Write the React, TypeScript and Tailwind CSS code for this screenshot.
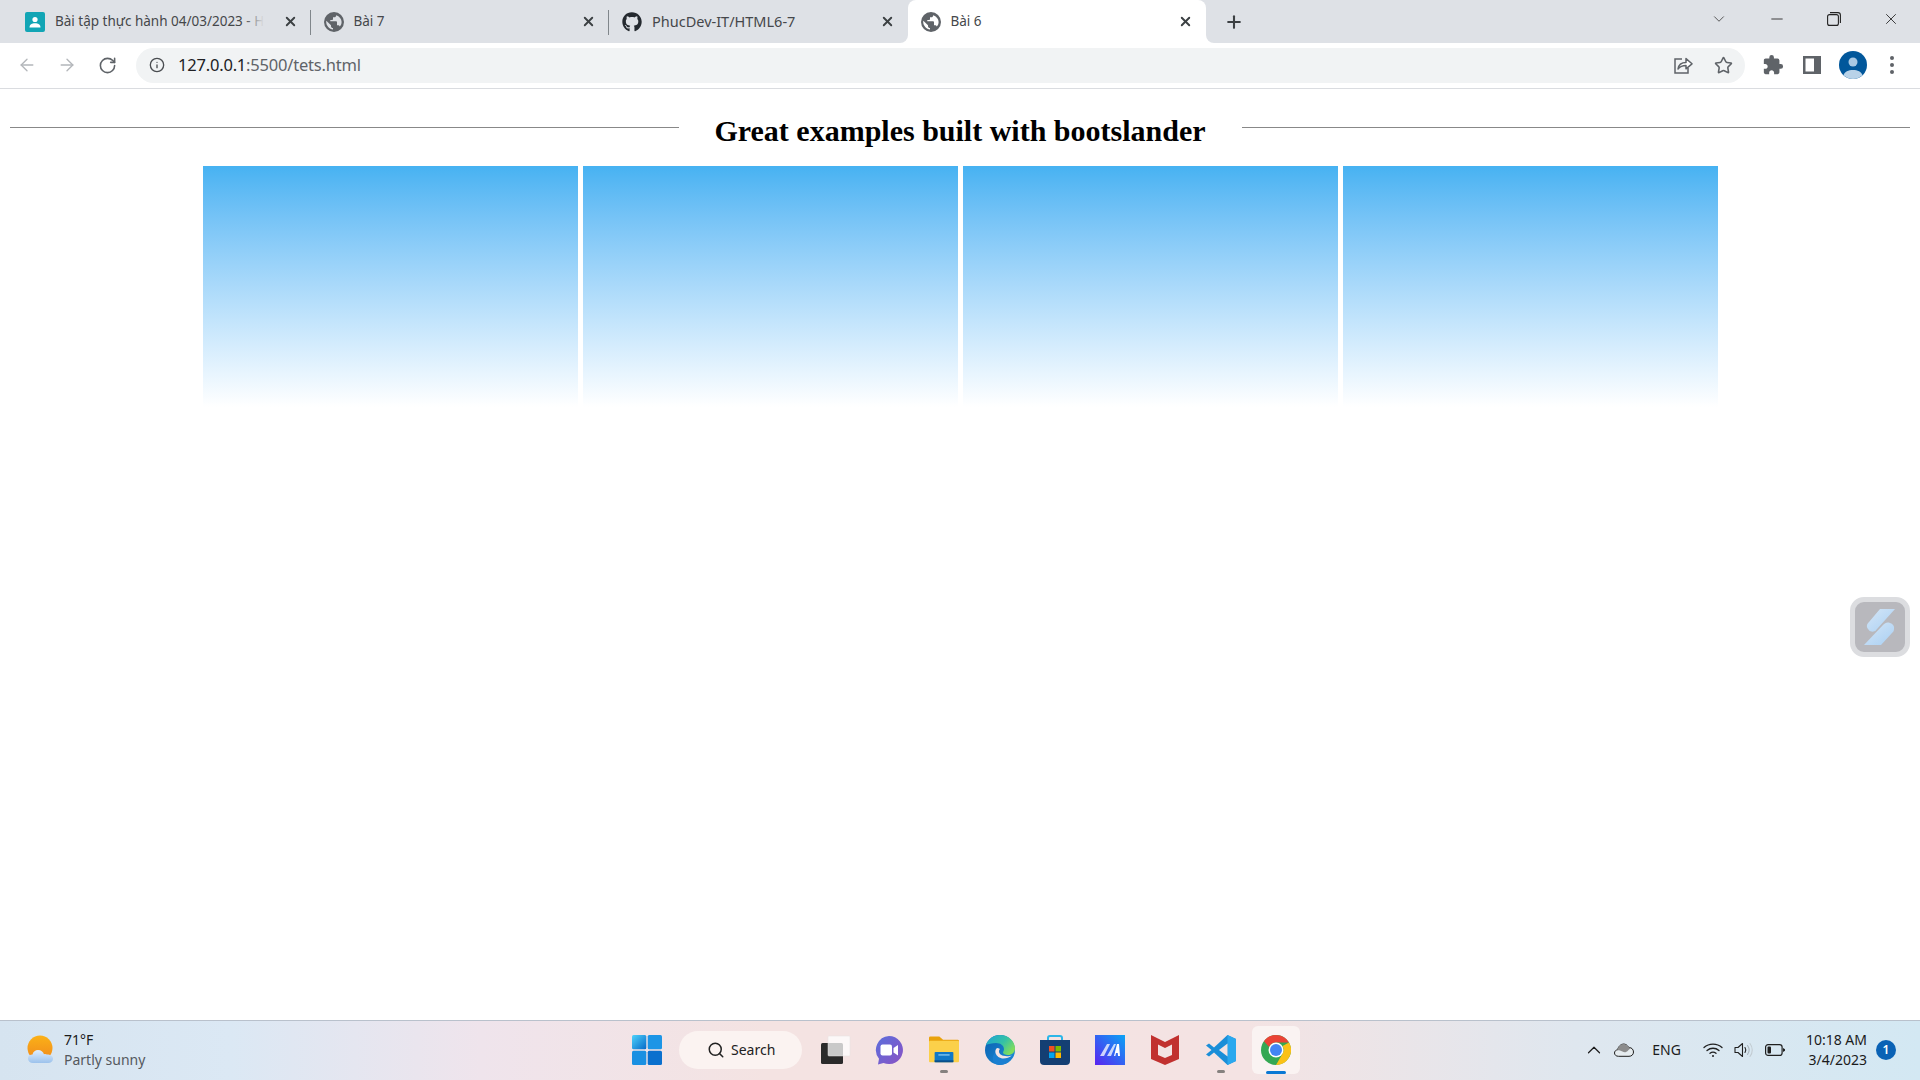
import { Star, X, Plus, ArrowLeft, ArrowRight, RotateCw, Info, ChevronDown, ChevronUp, Minus, Search } from "lucide-react";
import { FaGithub } from "react-icons/fa";
import { MdExtension } from "react-icons/md";

const tabs = [
  { id: "class", title: "Bài tập thực hành 04/03/2023 - H", icon: "classroom", fade: true, size: "text-[13.5px]" },
  { id: "b7", title: "Bài 7", icon: "globe", size: "text-[13.5px]" },
  { id: "gh", title: "PhucDev-IT/HTML6-7", icon: "github", size: "text-[14.5px]" },
  { id: "b6", title: "Bài 6", icon: "globe", active: true, size: "text-[13.5px]" },
];

function TabIcon({ icon }: { icon: string }) {
  if (icon === "classroom") {
    return (
      <svg width="20" height="20" viewBox="0 0 20 20" className="shrink-0">
        <rect width="20" height="20" rx="2" fill="#12a5b5" />
        <circle cx="10" cy="7.5" r="2.6" fill="#fff" />
        <path d="M4.5 15.5c0-3 2.5-4.2 5.5-4.2s5.5 1.2 5.5 4.2z" fill="#fff" />
      </svg>
    );
  }
  if (icon === "github") return <FaGithub className="shrink-0 text-[20px] text-[#24292f]" />;
  // chrome's default favicon: solid disc with the land cut out
  return (
    <svg width="20" height="20" viewBox="2 2 20 20" className="shrink-0">
      <path
        fill="#5f6368"
        fillRule="evenodd"
        d="M12 2a10 10 0 1 0 0 20 10 10 0 0 0 0-20zM4.300 10.800L9 15.300v.9c0 1.100.9 1.900 2 1.900v1.500c-3.600-.6-6.800-3.900-6.800-7.600 0-.4 0-.8.1-1.200zM14.200 5.200c3 1.100 5.400 3.700 5.400 6.800 0 1.800-.6 3.300-1.800 4.600-.3-.8-1-1.300-1.800-1.300h-1v-3c0-.5-.5-1-1-1H8.300V10H10c.5 0 1-.4 1-1V7.300h1.300c1.100 0 1.900-1 1.900-2.100z"
      />
    </svg>
  );
}

type TabProps = { title: string; icon: string; size: string; active?: boolean; last?: boolean; fade?: boolean };

function BrowserTab({ title, icon, size, active, last, fade }: TabProps) {
  return (
    <div className={`relative flex h-full w-[298.500px] items-center pr-[13px] pl-[13px] ${active ? "rounded-t-lg bg-white" : ""}`}>
      {active && (
        <>
          <span className="absolute bottom-0 -left-2 size-2 bg-white">
            <span className="block size-full rounded-br-lg bg-[#dee1e6]" />
          </span>
          <span className="absolute bottom-0 -right-2 size-2 bg-white">
            <span className="block size-full rounded-bl-lg bg-[#dee1e6]" />
          </span>
        </>
      )}
      <TabIcon icon={icon} />
      <div className={`relative ml-[10px] min-w-0 flex-1 whitespace-nowrap text-[#45474a] ${size}`}>
        <span className="relative inline-block">
          {title}
          {fade && <span className="absolute inset-y-0 right-0 w-5 bg-gradient-to-r from-transparent to-[#dee1e6]" />}
        </span>
      </div>
      <X className="ml-2 size-[15px] shrink-0 text-[#3c4043]" strokeWidth={3} />
      {!active && !last && <span className="absolute top-[10px] right-0 h-[25px] w-px bg-[#80868b]" />}
    </div>
  );
}

function ShareIcon() {
  return (
    <svg width="20" height="20" viewBox="0 0 20 20" fill="none" stroke="#5f6368" strokeWidth="1.5">
      <path d="M9 4H2v14h13v-5" />
      <path d="M5 14c.6-4 3.6-6.500 8-6.500V3.600l6 5.200-6 5V10.500c-3 0-6 1-8 3.500z" strokeLinejoin="round" fill="#fff" />
    </svg>
  );
}

function WeatherIcon() {
  return (
    <svg width="30" height="30" viewBox="0 0 30 30">
      <defs>
        <linearGradient id="sun" x1="0" y1="0" x2="0" y2="1">
          <stop offset="0" stopColor="#fbb117" />
          <stop offset="1" stopColor="#f08a1d" />
        </linearGradient>
        <linearGradient id="cloud" x1="0" y1="0" x2="0" y2="1">
          <stop offset="0" stopColor="#dfeeff" />
          <stop offset="1" stopColor="#9cc2ec" />
        </linearGradient>
      </defs>
      <circle cx="14" cy="13" r="12.500" fill="url(#sun)" />
      <path d="M7 28c-3 0-5-2-5-4.500S4 19.500 6.500 19.500c.5-2.800 3-4.500 5.500-4.500 3 0 5.200 1.800 6 4.200 1-.4 2-.2 3 .3 3.500 0 6 1.800 6 4.300S25 28 22 28z" fill="url(#cloud)" />
    </svg>
  );
}

function WindowsLogo() {
  return (
    <svg width="30" height="30" viewBox="0 0 30 30">
      <defs>
        <linearGradient id="win" x1="0" y1="0" x2="1" y2="1">
          <stop offset="0" stopColor="#4fd3fb" />
          <stop offset="1" stopColor="#0569c9" />
        </linearGradient>
      </defs>
      <rect x="0" y="0" width="14.300" height="14.300" rx="1.500" fill="url(#win)" />
      <rect x="15.700" y="0" width="14.300" height="14.300" rx="1.500" fill="#1c95e6" />
      <rect x="0" y="15.700" width="14.300" height="14.300" rx="1.500" fill="#1a90e2" />
      <rect x="15.700" y="15.700" width="14.300" height="14.300" rx="1.500" fill="#0a70ce" />
    </svg>
  );
}

function TaskViewIcon() {
  return (
    <svg width="30" height="30" viewBox="0 0 30 30">
      <rect x="0" y="8" width="22" height="21" rx="1.500" fill="#2a2a2a" />
      <rect x="7" y="1" width="22" height="20" rx="1" fill="#fff" fillOpacity="0.75" stroke="#e6e0e0" strokeWidth="0.500" />
    </svg>
  );
}

function ChatIcon() {
  return (
    <svg width="30" height="30" viewBox="0 0 30 30">
      <defs>
        <linearGradient id="chat" x1="0" y1="0" x2="1" y2="1">
          <stop offset="0" stopColor="#5b6fdc" />
          <stop offset="1" stopColor="#8a52c4" />
        </linearGradient>
      </defs>
      <path d="M15 1a14 14 0 1 1-5.500 26.900L4 29.500l1-5.800A14 14 0 0 1 15 1z" fill="url(#chat)" />
      <rect x="6.500" y="9.500" width="11.500" height="11" rx="2" fill="#fff" />
      <path d="M19.500 13l4.500-3v10.500l-4.500-3z" fill="#fff" />
    </svg>
  );
}

function FolderIcon() {
  return (
    <svg width="32" height="30" viewBox="0 0 32 30">
      <path d="M0 2a1.500 1.500 0 0 1 1.500-1.500H11L15 4h15.500A1.500 1.500 0 0 1 32 5.500V9H0z" fill="#e9a20c" />
      <rect x="0" y="5" width="32" height="23" rx="1" fill="#fbd04a" />
      <rect x="6" y="17" width="20" height="11" rx="1" fill="#0f78c8" />
      <rect x="6" y="26" width="20" height="2" fill="#0a4f8a" />
      <rect x="10" y="19.500" width="12" height="1.500" fill="#7fc5f0" />
    </svg>
  );
}

function EdgeIcon() {
  return (
    <svg width="30" height="30" viewBox="0 0 30 30">
      <defs>
        <linearGradient id="edgeA" x1="0" y1="0" x2="1" y2="0.600">
          <stop offset="0" stopColor="#1ba4d8" />
          <stop offset="0.600" stopColor="#35c1a5" />
          <stop offset="1" stopColor="#7fdc5d" />
        </linearGradient>
        <linearGradient id="edgeB" x1="0" y1="0" x2="1" y2="1">
          <stop offset="0" stopColor="#0a5fb0" />
          <stop offset="1" stopColor="#1d8fd8" />
        </linearGradient>
      </defs>
      <circle cx="15" cy="15" r="15" fill="url(#edgeB)" />
      <path d="M1 10C3 4 8.500 0 15 0c8.300 0 15 6 15 13.500 0 4-3 6.500-7 6.500-3 0-5-1-5-2.500 0-1 1-1.500 1-3.500 0-3-3-6-8-6-4 0-8 1-10 2z" fill="url(#edgeA)" />
      <path d="M11 17c0 4 3.500 6.500 8 6.500 3 0 6-.8 9-3-2 5.500-7 9.500-13 9.500-3 0-6-1-7-5-1-3 1-7 3-8z" fill="#1a7fd1" />
      <path d="M12 13c-1.500 1-2 3-1.500 5 1 3 4 5.500 8 5.500 3 0 6-1 8.500-3-1 .3-3 .7-5 .7-5 0-8-2-8-4.700 0-1 .3-2 1-2.500-1-.8-2-1-3-1z" fill="#f3e3e3" />
    </svg>
  );
}

function StoreIcon() {
  return (
    <svg width="30" height="30" viewBox="0 0 30 30">
      <path d="M8 6V3a2 2 0 0 1 2-2h10a2 2 0 0 1 2 2v3" fill="none" stroke="#2cb6e8" strokeWidth="2" />
      <path d="M0 5h30v21a4 4 0 0 1-4 4H4a4 4 0 0 1-4-4z" fill="#143f73" />
      <rect x="9" y="11" width="5.500" height="5.500" fill="#f25022" />
      <rect x="15.500" y="11" width="5.500" height="5.500" fill="#7fba00" />
      <rect x="9" y="17.500" width="5.500" height="5.500" fill="#00a4ef" />
      <rect x="15.500" y="17.500" width="5.500" height="5.500" fill="#ffb900" />
    </svg>
  );
}

function MaIcon() {
  return (
    <svg width="30" height="30" viewBox="0 0 30 30">
      <defs>
        <linearGradient id="ma" x1="0" y1="1" x2="1" y2="0">
          <stop offset="0" stopColor="#5a22f0" />
          <stop offset="1" stopColor="#0aa4f5" />
        </linearGradient>
      </defs>
      <rect width="30" height="30" fill="url(#ma)" />
      <path d="M5 21L12 9h3L9 21zM12 21L19 9h2L16 21z" fill="#fff" fillOpacity="0.75" />
      <path d="M19 21l3-12h2l1 12h-2l-.2-3H21l-.7 3z" fill="#fff" />
    </svg>
  );
}

function McAfeeIcon() {
  return (
    <svg width="28" height="30" viewBox="0 0 28 30">
      <path d="M0 0l7 3.500L14 7l7-3.500L28 0v24l-14 6-14-6z" fill="#c1312f" />
      <path d="M7 9.500l7 3.500 7-3.500v10.500l-7 3-7-3z" fill="#f3e3e3" />
    </svg>
  );
}

function VsCodeIcon() {
  return (
    <svg width="30" height="30" viewBox="0 0 30 30">
      <path d="M21.500 0L30 4v22l-8.500 4L8 17.500l-5 4L0 19.500 5.500 15 0 10.500l3-2 5 4z" fill="#1a8ed8" />
      <path d="M21.500 0L30 4v22l-8.500 4z" fill="#2aa8ee" />
      <path d="M21.500 8.500v13L13 15z" fill="#f3e3e3" />
    </svg>
  );
}

function ChromeIcon() {
  return (
    <svg width="30" height="30" viewBox="0 0 30 30">
      <circle cx="15" cy="15" r="15" fill="#34a853" />
      <path d="M15 0a15 15 0 0 1 13 7.500H15a7.500 7.500 0 0 0-6.900 4.500L2.900 6.200A15 15 0 0 1 15 0z" fill="#ea4335" />
      <path d="M28 7.500A15 15 0 0 1 15 30l6.500-11.300A7.500 7.500 0 0 0 21.500 11z" fill="#fbc116" />
      <circle cx="15" cy="15" r="7.500" fill="#fff" />
      <circle cx="15" cy="15" r="6" fill="#4285f4" />
    </svg>
  );
}

function WifiIcon() {
  return (
    <svg width="20" height="16" viewBox="0 0 20 16" fill="none" stroke="#1f1f1f" strokeWidth="1.300" strokeLinecap="round">
      <path d="M1 5.500c5-4.500 13-4.500 18 0" />
      <path d="M4 8.500c3.500-3 8.500-3 12 0" />
      <path d="M7 11.300c1.800-1.500 4.200-1.500 6 0" />
      <circle cx="10" cy="14" r="1" fill="#1f1f1f" stroke="none" />
    </svg>
  );
}

function SpeakerIcon() {
  return (
    <svg width="20" height="18" viewBox="0 0 20 18" fill="none" strokeWidth="1.100">
      <path d="M1 6.500h3L8.500 2.500v13L4 11.500H1z" stroke="#1f1f1f" strokeLinejoin="round" />
      <path d="M11 6.500c1 1.500 1 3.500 0 5" stroke="#1f1f1f" strokeLinecap="round" />
      <path d="M13.500 4.500c2 2.700 2 6.300 0 9" stroke="#a9b4bc" strokeLinecap="round" />
      <path d="M16 2.500c3 3.800 3 9.200 0 13" stroke="#c3ccd2" strokeLinecap="round" />
    </svg>
  );
}

function BatteryIcon() {
  return (
    <svg width="20" height="12" viewBox="0 0 20 12" fill="none">
      <rect x="0.600" y="0.600" width="16.500" height="10.800" rx="2.500" stroke="#1f1f1f" strokeWidth="1.200" />
      <rect x="2.500" y="2.500" width="3.500" height="7" rx="1" fill="#1f1f1f" />
      <path d="M18 4l2 1.200v1.600L18 8z" fill="#1f1f1f" />
    </svg>
  );
}

function TrayCloud() {
  return (
    <svg width="20" height="14" viewBox="0 0 20 14">
      <path d="M4.500 13.300C2 13.300.5 11.800.5 10s1.300-3 3-3.200C4.300 3.800 6.500 1 9.500 1c2.300 0 4 1.300 5 3.300 2.800 0 5 2 5 4.700s-2 4.300-4.500 4.300z" fill="#e6ecef" stroke="#1f1f1f" strokeWidth="1" />
      <path d="M.8 9.200C2 7 4 6.800 6 7.500c2 .8 4 2.200 6 1.500s3-3.500 5-3.500c-.7-.7-1.600-1.200-2.500-1.200-1-2-2.700-3.300-5-3.300-3 0-5.200 2.800-6 5.800C2.100 7 1.100 8 .8 9.200z" fill="#8c8c8c" />
    </svg>
  );
}

function ProfileAvatar() {
  return (
    <svg width="28" height="28" viewBox="0 0 28 28">
      <circle cx="14" cy="14" r="14" fill="#01579b" />
      <circle cx="14" cy="11" r="4.500" fill="#a9c9e4" />
      <path d="M4.500 24.300c1-3.500 5-5.300 9.500-5.300s8.500 1.800 9.500 5.300A14 14 0 0 1 14 28a14 14 0 0 1-9.500-3.700z" fill="#b8d2e8" />
    </svg>
  );
}

function BoltWidget() {
  return (
    <svg width="32" height="36" viewBox="0 0 32 36">
      <defs>
        <linearGradient id="bolt" x1="0" y1="0" x2="1" y2="1">
          <stop offset="0" stopColor="#d5e6f7" />
          <stop offset="1" stopColor="#a9d0f3" />
        </linearGradient>
      </defs>
      <path d="M16 0h15L13 20a5 5 0 0 1-9 0c-2-3-1-5 1-7z" fill="url(#bolt)" />
      <path d="M26 14a5 5 0 0 1 4 6c0 2-1 3-2 4L17 36H0L19 16c2-2 4-3 7-2z" fill="url(#bolt)" />
    </svg>
  );
}

const taskbarApps = [
  { id: "chat", el: <ChatIcon />, mark: false },
  { id: "folder", el: <FolderIcon />, mark: true },
  { id: "edge", el: <EdgeIcon />, mark: false },
  { id: "store", el: <StoreIcon />, mark: false },
  { id: "ma", el: <MaIcon />, mark: false },
  { id: "mcafee", el: <McAfeeIcon />, mark: false },
  { id: "code", el: <VsCodeIcon />, mark: true },
];

export default function App() {
  return (
    <div className="flex h-screen w-full flex-col overflow-hidden bg-white font-['Noto_Sans',sans-serif]">
      {/* Tab strip */}
      <div className="flex h-[43px] shrink-0 items-stretch bg-[#dee1e6]">
        <div className="flex pl-[12px]">
          {tabs.map((t, i) => (
            <BrowserTab key={t.id} title={t.title} icon={t.icon} size={t.size} active={t.active} fade={t.fade} last={i === 2} />
          ))}
        </div>
        <div className="ml-[18px] flex items-center">
          <Plus className="size-[20px] text-[#3c4043]" strokeWidth={2.5} />
        </div>
        <div className="ml-auto flex items-center pb-[6px] text-[#2a2a2a]">
          <ChevronDown className="mr-[40px] size-[18px] text-[#4a4a4a]" strokeWidth={1.2} />
          <Minus className="size-[18px]" strokeWidth={1.2} />
          <svg width="14" height="14" viewBox="0 0 14 14" fill="none" stroke="#222" strokeWidth="1.100" className="ml-[41px]">
            <rect x="0.600" y="2.600" width="10.800" height="10.800" rx="2" />
            <path d="M3 .6h8a2.400 2.400 0 0 1 2.400 2.400v8" />
          </svg>
          <X className="mr-[20px] ml-[41px] size-[18px]" strokeWidth={1.2} />
        </div>
      </div>

      {/* Toolbar */}
      <div className="flex h-[46px] shrink-0 items-center border-b border-[#dadce0] bg-white pb-px">
        <div className="flex w-[136px] shrink-0 items-center pl-[17px]">
          <ArrowLeft className="size-[20px] text-[#b3b6ba]" strokeWidth={1.6} />
          <ArrowRight className="ml-[20px] size-[20px] text-[#b3b6ba]" strokeWidth={1.6} />
          <RotateCw className="ml-[21px] size-[19px] text-[#5f6368]" strokeWidth={2} />
        </div>
        <div className="flex h-[35px] w-[1609px] items-center rounded-full bg-[#f1f3f4] pr-[12px] pl-[13px]">
          <Info className="size-[16px] text-[#4a4d51]" strokeWidth={2} />
          <div className="ml-[13px] pt-px text-[16.500px] tracking-[-0.2px] text-[#5f6368]">
            <span className="text-[#202124]">127.0.0.1</span>:5500/tets.html
          </div>
          <div className="ml-auto flex items-center gap-[21px]">
            <ShareIcon />
            <Star className="size-[19px] text-[#5f6368]" strokeWidth={2} />
          </div>
        </div>
        <div className="ml-[17px] flex items-center">
          <MdExtension className="text-[22px] text-[#5f6368]" />
          <svg width="18" height="18" viewBox="0 0 18 18" className="ml-[19px]">
            <path d="M0 0h18v18H0z M2.500 2.500v13H11v-13z" fill="#5f6368" fillRule="evenodd" />
          </svg>
          <div className="ml-[18px]">
            <ProfileAvatar />
          </div>
          <div className="ml-[23px] flex flex-col gap-[3px]">
            <span className="size-[4px] rounded-full bg-[#5f6368]" />
            <span className="size-[4px] rounded-full bg-[#5f6368]" />
            <span className="size-[4px] rounded-full bg-[#5f6368]" />
          </div>
        </div>
      </div>

      {/* Page */}
      <main className="relative min-h-0 flex-1 px-[10px]">
        <div className="flex h-[77px] items-start">
          <span className="mt-[38px] h-px flex-1 bg-[#888888]" />
          <h1 className="w-[563px] pt-[22px] text-center font-['Liberation_Serif',serif] text-[30px] leading-[40px] font-bold text-black">
            Great examples built with bootslander
          </h1>
          <span className="mt-[38px] h-px flex-1 bg-[#888888]" />
        </div>
        <div className="mx-auto grid w-[1515px] grid-cols-4 gap-[5px]">
          <div className="h-[241px] bg-gradient-to-b from-[#46b2f2] to-white" />
          <div className="h-[241px] bg-gradient-to-b from-[#46b2f2] to-white" />
          <div className="h-[241px] bg-gradient-to-b from-[#46b2f2] to-white" />
          <div className="h-[241px] bg-gradient-to-b from-[#46b2f2] to-white" />
        </div>
        {/* floating extension button */}
        <div className="absolute top-[508px] right-[10px] flex size-[60px] items-center justify-center rounded-[14px] border-[5px] border-[#dcdde0] bg-[#b8b8bd]">
          <BoltWidget />
        </div>
      </main>

      {/* Windows taskbar */}
      <div className="flex h-[60px] shrink-0 items-center border-t border-[#b9c1cc] bg-[linear-gradient(90deg,#d6e4f0_0%,#dbe8f4_12%,#efe4ec_25%,#f4e3e2_40%,#f4e3e3_65%,#dfe7ef_82%,#d3e8f3_100%)] pb-[2px]">
        <div className="flex w-[632px] shrink-0 items-center pl-[26px]">
          <WeatherIcon />
          <div className="ml-[8px] text-[14px] leading-[20px]">
            <div className="text-[#1b1b1b]">71°F</div>
            <div className="text-[#55595e]">Partly sunny</div>
          </div>
        </div>
        <WindowsLogo />
        <div className="ml-[17px] flex h-[38px] w-[123px] items-center rounded-full bg-[#fbf3f1] pl-[28px] text-[14px] text-[#222]">
          <Search className="size-[18px]" strokeWidth={2} />
          <span className="ml-[6px]">Search</span>
        </div>
        <div className="ml-[19px]">
          <TaskViewIcon />
        </div>
        <div className="ml-[23px] flex items-center gap-[25.300px]">
          {taskbarApps.map((a) => (
            <div key={a.id} className="relative flex w-[30px] items-center justify-center">
              {a.el}
              {a.mark && <span className="absolute -bottom-[8px] left-[11px] h-[3px] w-[8px] rounded-full bg-[#85817f]" />}
            </div>
          ))}
        </div>
        <div className="relative ml-[16px] flex size-[48px] items-center justify-center rounded-md bg-[#faf3f2]">
          <ChromeIcon />
          <span className="absolute bottom-0 left-[14px] h-[3px] w-[20px] rounded-full bg-[#0a78d4]" />
        </div>
        <div className="ml-auto flex items-center pr-[24px] text-[#1b1b1b]">
          <ChevronUp className="size-[22px]" strokeWidth={1.3} />
          <div className="ml-[9px]">
            <TrayCloud />
          </div>
          <span className="ml-[18px] text-[14px]">ENG</span>
          <div className="ml-[22px]">
            <WifiIcon />
          </div>
          <div className="ml-[11px]">
            <SpeakerIcon />
          </div>
          <div className="ml-[11px]">
            <BatteryIcon />
          </div>
          <div className="ml-[21px] text-right text-[14px] leading-[20px]">
            <div>10:18 AM</div>
            <div>3/4/2023</div>
          </div>
          <div className="ml-[9px] flex size-[20px] items-center justify-center rounded-full bg-[#0a62b5] text-[12px] font-semibold text-white">1</div>
        </div>
      </div>
    </div>
  );
}
